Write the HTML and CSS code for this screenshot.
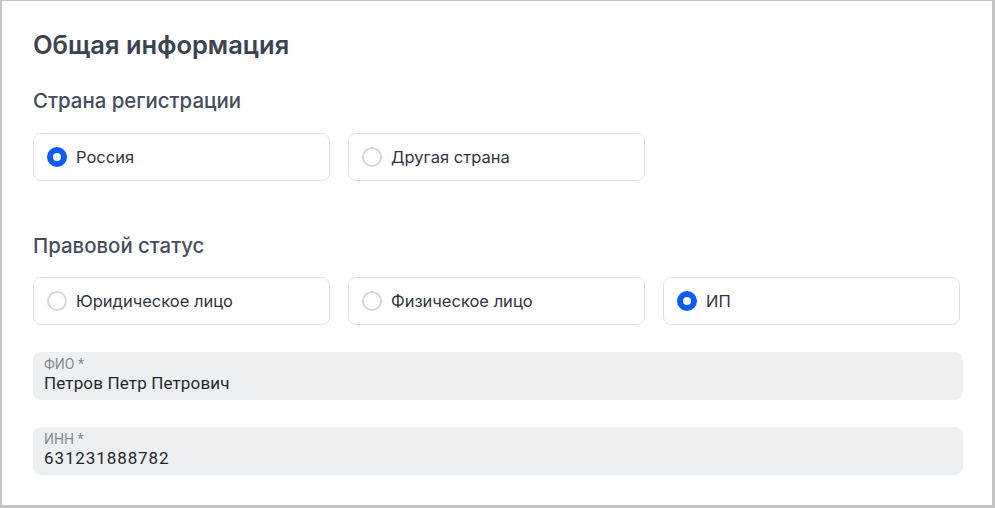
FILE: index.html
```html
<!DOCTYPE html>
<html lang="ru">
<head>
<meta charset="utf-8">
<link rel="stylesheet" href="styles.css">
</head>
<body>
<div class="frame">
  <h1 class="title">Общая информация</h1>

  <h2 class="subtitle">Страна регистрации</h2>
  <div class="options">
    <label class="option"><span class="radio checked"></span><span class="option-text">Россия</span></label>
    <label class="option"><span class="radio"></span><span class="option-text">Другая страна</span></label>
  </div>

  <h2 class="subtitle subtitle-spaced">Правовой статус</h2>
  <div class="options">
    <label class="option"><span class="radio"></span><span class="option-text">Юридическое лицо</span></label>
    <label class="option"><span class="radio"></span><span class="option-text">Физическое лицо</span></label>
    <label class="option"><span class="radio checked"></span><span class="option-text">ИП</span></label>
  </div>

  <div class="field">
    <div class="field-label">ФИО *</div>
    <div class="field-value">Петров Петр Петрович</div>
  </div>
  <div class="field">
    <div class="field-label">ИНН *</div>
    <div class="field-value field-number">631231888782</div>
  </div>
</div>
</body>
</html>
```

FILE: styles.css
```css
* { box-sizing: border-box; }
html, body { margin: 0; padding: 0; background: #ffffff; }
body { font-family: Inter, "Noto Sans", sans-serif; }

.frame {
  width: 995px;
  height: 508px;
  border-style: solid;
  border-color: #c4c4c4;
  border-width: 1px 3px 3px 2px;
  padding: 30px 29px 0 31px;
  background: #fff;
}

.title {
  margin: 0;
  font-size: 25.5px;
  line-height: 28px;
  font-weight: 600;
  color: #3b4352;
}

.subtitle {
  margin: 30px 0 20px;
  font-size: 20.4px;
  line-height: 24px;
  font-weight: 500;
  color: #454d5c;
}
.subtitle-spaced { margin-top: 53px; margin-bottom: 19px; }

.options {
  display: grid;
  grid-template-columns: repeat(3, 297px);
  column-gap: 18px;
}

.option {
  height: 48px;
  border: 1px solid #dfe3ea;
  border-radius: 8px;
  display: flex;
  align-items: center;
  padding-left: 13px;
  gap: 9px;
}

.radio {
  width: 20px;
  height: 20px;
  border-radius: 50%;
  border: 2px solid #d0d7e0;
  flex: none;
}
.radio.checked {
  border: 6px solid #0a5cff;
  background: #fff;
}

.option-text {
  font-size: 16.5px;
  line-height: 20px;
  color: #2f3540;
}

.field {
  width: 930px;
  height: 48px;
  background: #edf0f3;
  border-radius: 8px;
  padding: 4px 11px 0;
  margin-top: 27px;
  font-family: Roboto, "Liberation Sans", sans-serif;
}

.field-label {
  font-size: 14px;
  line-height: 17px;
  color: #878a90;
}
.field-value {
  font-size: 17px;
  line-height: 21px;
  color: #23262b;
  letter-spacing: 0.15px;
}
.field-number { letter-spacing: 0.9px; }
```
